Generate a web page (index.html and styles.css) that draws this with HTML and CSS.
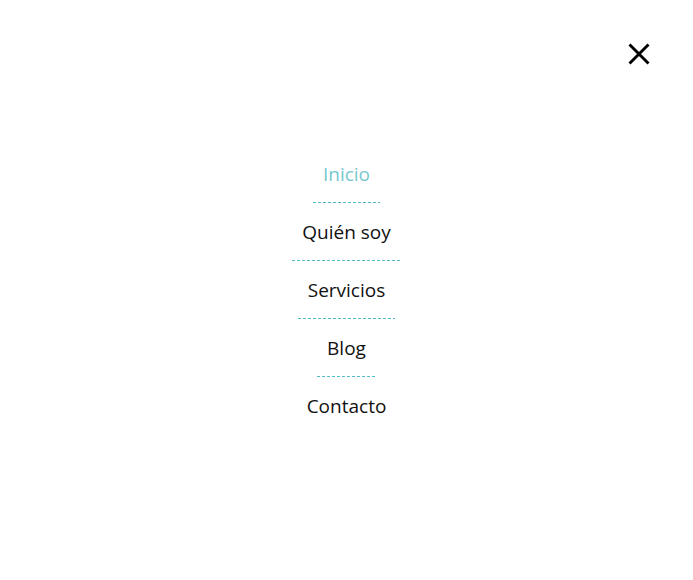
FILE: index.html
```html
<!DOCTYPE html>
<html lang="es">
<head>
<meta charset="utf-8">
<title>Menú</title>
<link rel="stylesheet" href="styles.css">
</head>
<body>
<div class="page">
  <button class="close" aria-label="Cerrar">
    <svg width="22" height="22" viewBox="0 0 22 22"><path d="M1.5 1.5 L20.5 20.5 M20.5 1.5 L1.5 20.5" stroke="#000" stroke-width="2.9" fill="none"/></svg>
  </button>
  <nav class="menu">
    <ul class="menu-list">
      <li class="menu-item active"><a href="#">Inicio</a></li>
      <li class="menu-item"><a href="#">Quién soy</a></li>
      <li class="menu-item"><a href="#">Servicios</a></li>
      <li class="menu-item"><a href="#">Blog</a></li>
      <li class="menu-item last"><a href="#">Contacto</a></li>
    </ul>
  </nav>
</div>
</body>
</html>
```
FILE: styles.css
```css
html, body {
  margin: 0;
  padding: 0;
  background: #fff;
}
.page {
  position: relative;
  height: 580px;
  display: flex;
  align-items: center;
  justify-content: center;
  font-family: "Open Sans", "Lato", sans-serif;
}
.close {
  position: absolute;
  top: 43px;
  left: 628px;
  width: 22px;
  height: 22px;
  padding: 0;
  border: 0;
  background: none;
  display: block;
}
.close svg { display: block; }
.menu-list {
  list-style: none;
  margin: 0;
  padding: 0;
  display: flex;
  flex-direction: column;
  align-items: center;
}
.menu-item {
  padding: 15px 10px 15px;
  background-image: linear-gradient(to right, #52bcc4 60%, transparent 60%);
  background-size: 5px 1px;
  background-repeat: repeat-x;
  background-position: left bottom;
}
.menu-item.last {
  background: none;
}
.menu-item a {
  display: block;
  font-size: 19px;
  line-height: 28px;
  color: #111;
  text-decoration: none;
  font-weight: 400;
}
.menu-item.active a {
  color: #78c8d0;
}
```
